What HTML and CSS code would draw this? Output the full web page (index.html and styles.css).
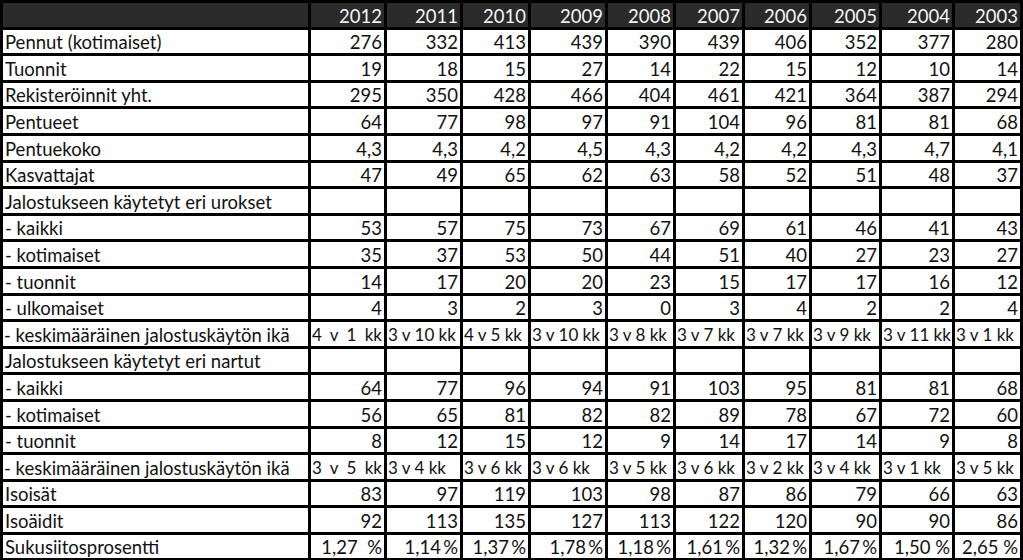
FILE: index.html
```html
<!DOCTYPE html>
<html lang="fi">
<head>
<meta charset="utf-8">
<title>Tilastot</title>
<link rel="stylesheet" href="styles.css">
</head>
<body>
<table class="stats">
  <colgroup>
    <col class="c-label"><col class="c-2012"><col class="c-2011"><col class="c-2010"><col class="c-2009"><col class="c-2008"><col class="c-2007"><col class="c-2006"><col class="c-2005"><col class="c-2004"><col class="c-2003">
  </colgroup>
  <thead>
    <tr class="head"><th></th><th>2012</th><th>2011</th><th>2010</th><th>2009</th><th>2008</th><th>2007</th><th>2006</th><th>2005</th><th>2004</th><th>2003</th></tr>
  </thead>
  <tbody>
    <tr><td>Pennut (kotimaiset)</td><td>276</td><td>332</td><td>413</td><td>439</td><td>390</td><td>439</td><td>406</td><td>352</td><td>377</td><td>280</td></tr>
    <tr><td>Tuonnit</td><td>19</td><td>18</td><td>15</td><td>27</td><td>14</td><td>22</td><td>15</td><td>12</td><td>10</td><td>14</td></tr>
    <tr><td>Rekisteröinnit yht.</td><td>295</td><td>350</td><td>428</td><td>466</td><td>404</td><td>461</td><td>421</td><td>364</td><td>387</td><td>294</td></tr>
    <tr><td>Pentueet</td><td>64</td><td>77</td><td>98</td><td>97</td><td>91</td><td>104</td><td>96</td><td>81</td><td>81</td><td>68</td></tr>
    <tr><td>Pentuekoko</td><td>4,3</td><td>4,3</td><td>4,2</td><td>4,5</td><td>4,3</td><td>4,2</td><td>4,2</td><td>4,3</td><td>4,7</td><td>4,1</td></tr>
    <tr><td>Kasvattajat</td><td>47</td><td>49</td><td>65</td><td>62</td><td>63</td><td>58</td><td>52</td><td>51</td><td>48</td><td>37</td></tr>
    <tr><td>Jalostukseen käytetyt eri urokset</td><td></td><td></td><td></td><td></td><td></td><td></td><td></td><td></td><td></td><td></td></tr>
    <tr><td>- kaikki</td><td>53</td><td>57</td><td>75</td><td>73</td><td>67</td><td>69</td><td>61</td><td>46</td><td>41</td><td>43</td></tr>
    <tr><td>- kotimaiset</td><td>35</td><td>37</td><td>53</td><td>50</td><td>44</td><td>51</td><td>40</td><td>27</td><td>23</td><td>27</td></tr>
    <tr><td>- tuonnit</td><td>14</td><td>17</td><td>20</td><td>20</td><td>23</td><td>15</td><td>17</td><td>17</td><td>16</td><td>12</td></tr>
    <tr><td>- ulkomaiset</td><td>4</td><td>3</td><td>2</td><td>3</td><td>0</td><td>3</td><td>4</td><td>2</td><td>2</td><td>4</td></tr>
    <tr class="age"><td>- keskimääräinen jalostuskäytön ikä</td><td class="dist">4 v 1 kk</td><td>3 v 10 kk</td><td>4 v 5 kk</td><td>3 v 10 kk</td><td>3 v 8 kk</td><td>3 v 7 kk</td><td>3 v 7 kk</td><td>3 v 9 kk</td><td>3 v 11 kk</td><td>3 v 1 kk</td></tr>
    <tr><td>Jalostukseen käytetyt eri nartut</td><td></td><td></td><td></td><td></td><td></td><td></td><td></td><td></td><td></td><td></td></tr>
    <tr><td>- kaikki</td><td>64</td><td>77</td><td>96</td><td>94</td><td>91</td><td>103</td><td>95</td><td>81</td><td>81</td><td>68</td></tr>
    <tr><td>- kotimaiset</td><td>56</td><td>65</td><td>81</td><td>82</td><td>82</td><td>89</td><td>78</td><td>67</td><td>72</td><td>60</td></tr>
    <tr><td>- tuonnit</td><td>8</td><td>12</td><td>15</td><td>12</td><td>9</td><td>14</td><td>17</td><td>14</td><td>9</td><td>8</td></tr>
    <tr class="age"><td>- keskimääräinen jalostuskäytön ikä</td><td class="dist">3 v 5 kk</td><td>3 v 4 kk</td><td>3 v 6 kk</td><td>3 v 6 kk</td><td>3 v 5 kk</td><td>3 v 6 kk</td><td>3 v 2 kk</td><td>3 v 4 kk</td><td>3 v 1 kk</td><td>3 v 5 kk</td></tr>
    <tr><td>Isoisät</td><td>83</td><td>97</td><td>119</td><td>103</td><td>98</td><td>87</td><td>86</td><td>79</td><td>66</td><td>63</td></tr>
    <tr><td>Isoäidit</td><td>92</td><td>113</td><td>135</td><td>127</td><td>113</td><td>122</td><td>120</td><td>90</td><td>90</td><td>86</td></tr>
    <tr><td>Sukusiitosprosentti</td><td>1,27&nbsp;&nbsp;%</td><td>1,14&thinsp;%</td><td>1,37&thinsp;%</td><td>1,78&thinsp;%</td><td>1,18&thinsp;%</td><td>1,61&thinsp;%</td><td>1,32&thinsp;%</td><td>1,67&thinsp;%</td><td>1,50&nbsp;%</td><td>2,65&nbsp;%</td></tr>
  </tbody>
</table>
</body>
</html>
```
FILE: styles.css
```css
html, body {
  margin: 0;
  padding: 0;
  background: #ffffff;
}
.stats {
  table-layout: fixed;
  border-collapse: separate;
  border-spacing: 3px;
  background: #000000;
  width: 1023px;
  font-family: Lato, "Liberation Sans", sans-serif;
  font-size: 18.5px;
  color: #111111;
}
.c-label { width: 305px; }
.c-2012 { width: 73px; }
.c-2011 { width: 73px; }
.c-2010 { width: 65px; }
.c-2009 { width: 74px; }
.c-2008 { width: 65px; }
.c-2007 { width: 66px; }
.c-2006 { width: 64px; }
.c-2005 { width: 67px; }
.c-2004 { width: 70px; }
.c-2003 { width: 65px; }
.stats th,
.stats td {
  box-sizing: border-box;
  height: 23.6px;
  padding: 0 2px 0 2px;
  line-height: 22px;
  white-space: nowrap;
  overflow: hidden;
  background: #ffffff;
  text-align: right;
  vertical-align: bottom;
}
.stats td:first-child {
  text-align: left;
  padding-left: 2px;
}
.stats .head th {
  background: #2a2a2a;
  color: #f4f4f4;
  font-weight: normal;
}
.stats .age td {
  text-align: left;
  padding-left: 1px;
  font-size: 17px;
}
.stats .age td:first-child {
  font-size: 18.5px;
}
.stats .age td.dist {
  text-align: justify;
  text-align-last: justify;
}
```
